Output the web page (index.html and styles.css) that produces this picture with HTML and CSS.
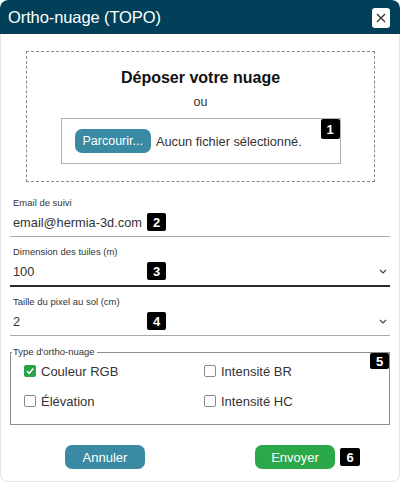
FILE: index.html
```html
<!DOCTYPE html>
<html lang="fr">
<head>
<meta charset="utf-8">
<title>Ortho-nuage (TOPO)</title>
<link rel="stylesheet" href="styles.css">
</head>
<body>
<div class="dialog">
  <header class="header">
    <h1 class="title">Ortho-nuage (TOPO)</h1>
    <button class="close" aria-label="Fermer">
      <svg width="10" height="10" viewBox="0 0 10 10"><path d="M1 1 L9 9 M9 1 L1 9" stroke="#333" stroke-width="1.3" fill="none"/></svg>
    </button>
  </header>
  <main class="content">
    <div class="dropzone">
      <div class="drop-title">Déposer votre nuage</div>
      <div class="drop-or">ou</div>
      <div class="file-box">
        <span class="browse">Parcourir...</span>
        <span class="file-name">Aucun fichier sélectionné.</span>
        <span class="badge badge-file">1</span>
      </div>
    </div>

    <div class="field field-first">
      <div class="field-label">Email de suivi</div>
      <div class="field-row">
        <span class="field-value">email@hermia-3d.com</span>
        <span class="badge">2</span>
      </div>
    </div>

    <div class="field field-focus">
      <div class="field-label">Dimension des tuiles (m)</div>
      <div class="field-row">
        <span class="field-value">100</span>
        <span class="badge">3</span>
        <svg class="chevron" width="8" height="5" viewBox="0 0 8 5"><path d="M1 1 L4 4 L7 1" stroke="#444" stroke-width="1.2" fill="none"/></svg>
      </div>
    </div>

    <div class="field">
      <div class="field-label">Taille du pixel au sol (cm)</div>
      <div class="field-row">
        <span class="field-value">2</span>
        <span class="badge">4</span>
        <svg class="chevron" width="8" height="5" viewBox="0 0 8 5"><path d="M1 1 L4 4 L7 1" stroke="#444" stroke-width="1.2" fill="none"/></svg>
      </div>
    </div>

    <fieldset class="types">
      <legend class="types-legend">Type d'ortho-nuage</legend>
      <div class="types-grid">
        <label class="check"><span class="box box-on"><svg width="10" height="10" viewBox="0 0 10 10"><path d="M2 5.2 L4.2 7.4 L8.2 2.6" stroke="#fff" stroke-width="1.6" fill="none"/></svg></span>Couleur RGB</label>
        <label class="check"><span class="box"></span>Intensité BR</label>
        <label class="check"><span class="box"></span>Élévation</label>
        <label class="check"><span class="box"></span>Intensité HC</label>
        <span class="badge badge-types">5</span>
      </div>
    </fieldset>

    <div class="actions">
      <button class="btn btn-cancel">Annuler</button>
      <div class="send-wrap">
        <button class="btn btn-send">Envoyer</button>
        <span class="badge badge-send">6</span>
      </div>
    </div>
  </main>
</div>
</body>
</html>
```

FILE: styles.css
```css
* { box-sizing: border-box; }

html, body {
  margin: 0;
  padding: 0;
  background: #ffffff;
}

body {
  font-family: "Liberation Sans", Arial, sans-serif;
  color: #222;
}

.dialog {
  width: 400px;
  height: 482px;
  border-radius: 8px;
  overflow: hidden;
  background: #fff;
  box-shadow: inset 0 0 0 1px #e4e4e4;
}

.header {
  height: 34px;
  background: #023f58;
  display: flex;
  align-items: center;
  justify-content: space-between;
  padding: 0 10px 0 8px;
  border-radius: 8px 8px 0 0;
}

.title {
  margin: 0;
  font-size: 16.5px;
  font-weight: normal;
  color: #fff;
  letter-spacing: -0.1px;
}

.close {
  width: 18px;
  height: 20px;
  border: none;
  border-radius: 3px;
  background: #fff;
  padding: 0;
  display: flex;
  align-items: center;
  justify-content: center;
  margin-top: 1px;
}

.content {
  padding: 0 10px;
}

.dropzone {
  margin: 17px 15px 0 16px;
  height: 131px;
  border: 1px dashed #8a8a8a;
  display: flex;
  flex-direction: column;
  align-items: center;
  padding-top: 16px;
}

.drop-title {
  font-size: 16px;
  font-weight: bold;
  line-height: 20px;
  color: #111;
}

.drop-or {
  margin-top: 6px;
  font-size: 12.5px;
  line-height: 16px;
  color: #333;
}

.file-box {
  position: relative;
  margin-top: 8px;
  width: 280px;
  height: 46px;
  border: 1px solid #b0b0b0;
  display: flex;
  align-items: center;
  padding-left: 13px;
}

.browse {
  height: 24px;
  line-height: 24px;
  padding: 0 8px;
  background: #3a8aa3;
  color: #fff;
  border-radius: 7px;
  font-size: 12.5px;
}

.file-name {
  margin-left: 5px;
  font-size: 12.8px;
  color: #333;
}

.badge {
  display: inline-flex;
  align-items: center;
  justify-content: center;
  width: 19px;
  height: 18px;
  background: #000;
  color: #fff;
  font-weight: bold;
  font-size: 13px;
  border-radius: 2px;
}

.badge-file {
  position: absolute;
  top: 0;
  right: 0;
  height: 20px;
}

.field {
  padding: 9px 0 4px 3px;
  border-bottom: 1px solid #a8a8a8;
}

.field-first {
  margin-top: 6px;
}

.field-focus {
  border-bottom: 2px solid #2a2a2a;
}

.field-label {
  font-size: 9.5px;
  line-height: 12px;
  color: #333;
}

.field-row {
  margin-top: 3px;
  height: 20px;
  display: flex;
  align-items: center;
}

.field-value {
  width: 134px;
  font-size: 12.8px;
  color: #333;
}

.chevron {
  margin-left: auto;
  margin-right: 3px;
}

.types {
  margin: 10px 0 0 0;
  padding: 0;
  border: 1px solid #8c8c8c;
  min-width: 0;
}

.types-legend {
  margin-left: 1px;
  padding: 0 2px 0 1px;
  font-size: 9.5px;
  line-height: 12px;
  color: #333;
}

.types-grid {
  position: relative;
  display: grid;
  grid-template-columns: 180px auto;
  row-gap: 10px;
  padding: 3px 0 13px 13px;
}

.check {
  display: flex;
  align-items: center;
  height: 20px;
  font-size: 13px;
  color: #333;
}

.box {
  width: 12px;
  height: 12px;
  margin-right: 5px;
  border: 1px solid #8a8a8a;
  border-radius: 2px;
  background: #fff;
  display: flex;
  align-items: center;
  justify-content: center;
}

.box-on {
  background: #28a347;
  border-color: #28a347;
}

.badge-types {
  position: absolute;
  top: -5px;
  right: 0;
  height: 16px;
}

.actions {
  margin-top: 20px;
  display: grid;
  grid-template-columns: 1fr 1fr;
  justify-items: center;
}

.send-wrap {
  position: relative;
}

.btn {
  width: 80px;
  height: 24px;
  border: none;
  border-radius: 7px;
  color: #fff;
  font-family: "Liberation Sans", Arial, sans-serif;
  font-size: 13px;
  padding: 0;
  display: block;
}

.btn-cancel {
  background: #3a8aa3;
}

.btn-send {
  background: #2aa84a;
}

.badge-send {
  position: absolute;
  left: 85px;
  top: 3px;
  width: 20px;
}
```
